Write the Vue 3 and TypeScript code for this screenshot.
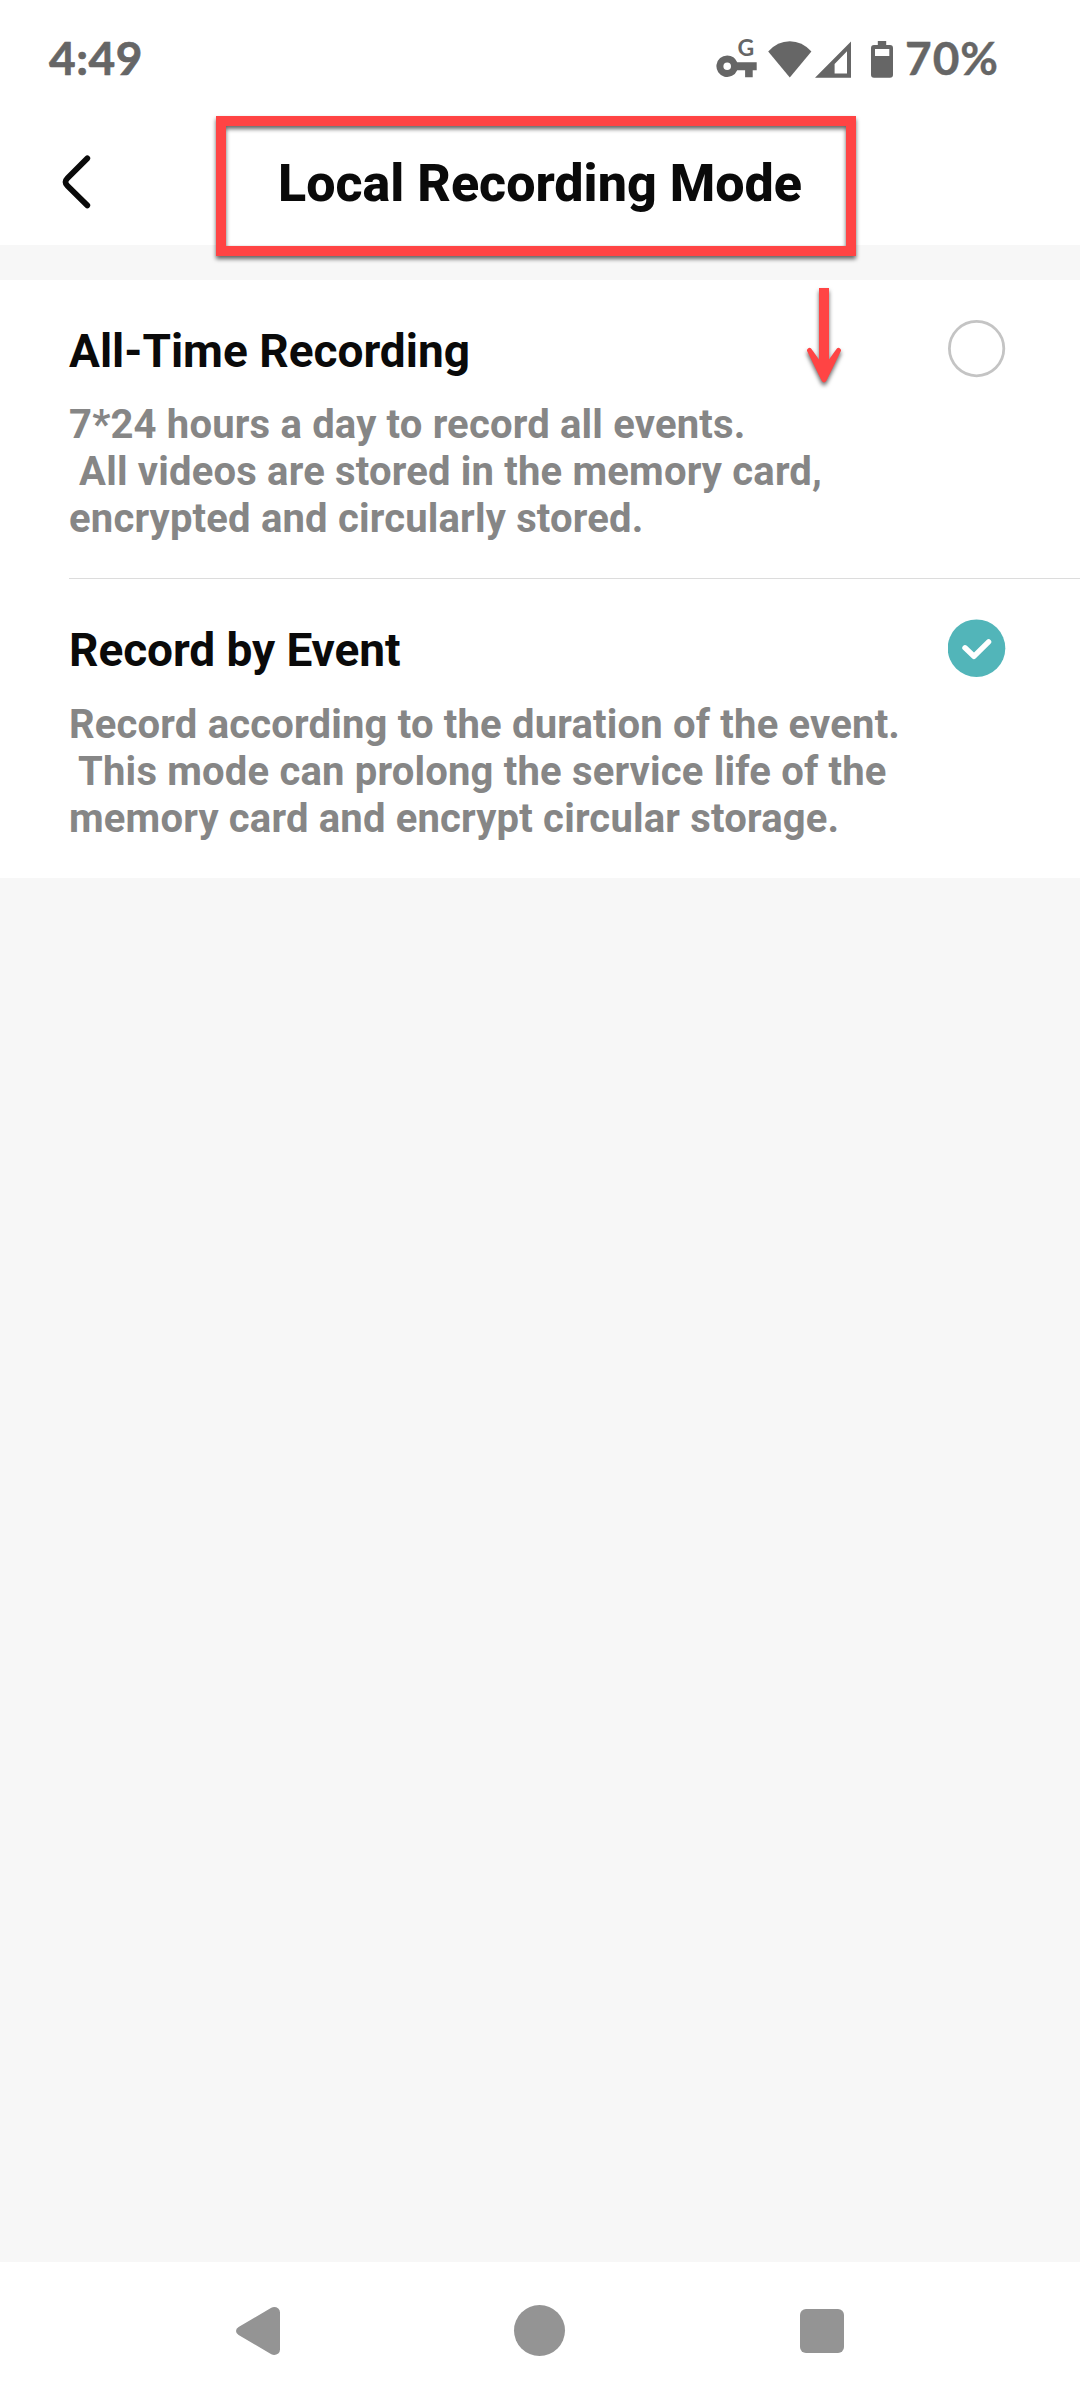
<script setup lang="ts">
import { ref } from 'vue'

interface ModeOption {
  id: string
  title: string
  description: string
}

const options: ModeOption[] = [
  {
    id: 'all-time',
    title: 'All-Time Recording',
    description:
      '7*24 hours a day to record all events.\n All videos are stored in the memory card,\nencrypted and circularly stored.',
  },
  {
    id: 'event',
    title: 'Record by Event',
    description:
      'Record according to the duration of the event.\n This mode can prolong the service life of the\nmemory card and encrypt circular storage.',
  },
]

const selected = ref('event')
</script>

<template>
  <div class="screen">
    <div class="status-bar">
      <span class="clock">4:49</span>
      <div class="status-icons">
        <svg class="icon-key" width="42" height="50" viewBox="0 -8 42 50">
          <path fill-rule="evenodd" d="M11.2 15.4a10.8 10.8 0 0 1 10 6.9h19.5v8h-4v7h-7.6v-7h-7.9a10.8 10.8 0 1 1-10-14.9zm0 7.1a3.8 3.8 0 1 0 0 7.6 3.8 3.8 0 0 0 0-7.6z" />
          <text class="key-letter" x="21.6" y="16.2">G</text>
        </svg>
        <svg class="icon-wifi" width="44" height="42" viewBox="0 0 44 42">
          <path d="M0.2 11.4Q9.5 1.2 21.8 1.2T43.4 11.4L21.8 37.5z" />
        </svg>
        <svg class="icon-signal" width="36" height="42" viewBox="0 0 36 42">
          <path fill-rule="evenodd" d="M0 37.8L36 1.5v36.3zM19.6 24v9.6H32V11.2z" />
        </svg>
        <svg class="icon-battery" width="22" height="42" viewBox="0 0 22 42">
          <path fill-rule="evenodd" d="M6.8 1h8.4v4H19a3 3 0 0 1 3 3v26.8a3 3 0 0 1-3 3H3a3 3 0 0 1-3-3V8a3 3 0 0 1 3-3h3.8zM4 9v7h14.3V9z" />
        </svg>
        <span class="battery-level">70%</span>
      </div>
    </div>

    <header class="app-bar">
      <svg class="back" width="32" height="60" viewBox="0 0 32 60">
        <path d="M27.3 6.4L7.4 26.2Q3.6 30 7.4 33.8L27.3 53.4" />
      </svg>
      <h1 class="title">Local Recording Mode</h1>
      <div class="highlight"></div>
    </header>

    <main class="options">
      <section v-for="option in options" :key="option.id" class="option" @click="selected = option.id">
        <div class="option-text">
          <h2 class="option-title">{{ option.title }}</h2>
          <p class="option-description">{{ option.description }}</p>
        </div>
        <svg class="radio" width="58" height="58" viewBox="0 0 58 58">
          <template v-if="selected === option.id">
            <circle class="radio-fill" cx="28.5" cy="29.2" r="28.8" />
            <path class="radio-check" d="M17 28.8L25.9 37.3L40.600 22.8" />
          </template>
          <circle v-else class="radio-ring" cx="28.6" cy="28.6" r="27.2" />
        </svg>
      </section>
      <svg class="pointer" width="50" height="110" viewBox="0 0 50 110">
        <path d="M20 8H30V79.500L37.700 68.800Q39 67.200 40.700 68.200Q42.600 69.400 41.800 71.300L27.500 100.500Q25 104.600 22.500 100.500L8.200 71.300Q7.400 69.400 9.300 68.200Q11 67.200 12.300 68.800L20 79.500z" />
      </svg>
    </main>

    <nav class="nav-bar">
      <svg class="nav-back" width="44" height="50" viewBox="0 0 44 50">
        <path d="M2.600 21L35.300 1.700Q39 0 42.300 2.500Q44 4 44 6.500V43.500Q44 46 42.300 47.500Q39 50 35.300 48.300L2.600 29Q0 27.500 0 25T2.600 21z" />
      </svg>
      <div class="nav-home"></div>
      <div class="nav-recent"></div>
    </nav>
  </div>
</template>

<style>
body {
  margin: 0;
}
</style>

<style scoped>
.screen {
  display: flex;
  flex-direction: column;
  width: 1080px;
  height: 2400px;
  background: #f7f7f7;
  font-family: Roboto, sans-serif;
  overflow: hidden;
}

.status-bar {
  display: flex;
  justify-content: space-between;
  align-items: center;
  height: 118px;
  padding: 0 82px 0 49px;
  box-sizing: border-box;
  background: #fff;
  color: #666;
  font-family: Lato, sans-serif;
  font-size: 46px;
  font-weight: 700;
  line-height: 56px;
}

.clock {
  margin-top: -2px;
  letter-spacing: 0.5px;
  -webkit-text-stroke: 0.7px #666;
}

.status-icons {
  display: flex;
  align-items: center;
  height: 42px;
  fill: #666;
}

.status-icons svg {
  flex: none;
  margin-top: 4px;
}

.status-icons .icon-key {
  margin-top: -4px;
}

.key-letter {
  font-family: Lato, sans-serif;
  font-size: 23px;
  font-weight: 700;
}

.icon-wifi {
  margin-left: 10px;
}

.icon-signal {
  margin-left: 3px;
}

.icon-battery {
  margin-left: 20px;
}

.battery-level {
  width: 93px;
  margin-top: -2px;
  margin-left: 12px;
  letter-spacing: 1px;
  white-space: nowrap;
  -webkit-text-stroke: 0.4px #666;
}

.app-bar {
  position: relative;
  display: flex;
  align-items: center;
  justify-content: center;
  height: 127px;
  background: #fff;
}

.back {
  position: absolute;
  left: 60px;
  top: 34px;
  fill: none;
  stroke: #0a0a0a;
  stroke-width: 5.8;
  stroke-linecap: round;
}

.title {
  margin: 5px 0 0;
  color: #0a0a0a;
  font-size: 52px;
  font-weight: 800;
  line-height: 62px;
}

.highlight {
  position: absolute;
  z-index: 1;
  left: 216px;
  top: -2px;
  width: 620px;
  height: 120px;
  border: 10px solid #ff4444;
  filter: drop-shadow(0 3px 2px rgba(0, 0, 0, 0.6));
}

.options {
  position: relative;
  margin-top: 35px;
  background: #fff;
}

.option {
  display: flex;
  justify-content: space-between;
  margin-left: 69px;
  padding: 44px 74px 36px 0;
}

.option + .option {
  border-top: 1px solid #dcdcdc;
}

.option-title {
  margin: 0 0 23px;
  color: #0a0a0a;
  font-size: 46px;
  font-weight: 700;
  line-height: 54px;
}

.option + .option .option-title {
  margin-bottom: 24px;
  letter-spacing: -0.08px;
}

.option-description {
  margin: 0;
  color: #868686;
  font-size: 40px;
  font-weight: 700;
  line-height: 47px;
  letter-spacing: 0.18px;
  white-space: pre;
}

.radio {
  flex: none;
  margin-top: -4px;
}

.radio-ring {
  fill: none;
  stroke: #c4c4c4;
  stroke-width: 2.8;
}

.radio-fill {
  fill: #52b5b9;
}

.radio-check {
  fill: none;
  stroke: #fff;
  stroke-width: 5.4;
  stroke-linecap: round;
  stroke-linejoin: round;
}

.pointer {
  position: absolute;
  left: 799px;
  top: 0;
  fill: #ff4444;
  filter: drop-shadow(0 3px 2px rgba(0, 0, 0, 0.6));
}

.nav-bar {
  display: flex;
  align-items: center;
  height: 138px;
  margin-top: auto;
  background: #fff;
}

.nav-back {
  margin-left: 236px;
  fill: #949494;
}

.nav-home {
  width: 51px;
  height: 51px;
  margin-top: -1px;
  margin-left: 234px;
  border-radius: 50%;
  background: #949494;
}

.nav-recent {
  width: 44px;
  height: 44px;
  margin-left: 235px;
  border-radius: 6px;
  background: #949494;
}
</style>
